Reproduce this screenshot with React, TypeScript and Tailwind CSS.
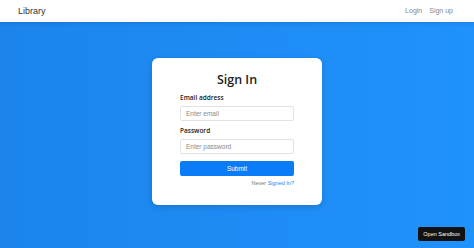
export default function App() {
  return (
    <div className="flex h-[248px] w-[474px] flex-col overflow-hidden font-['Liberation_Sans',sans-serif]">
      <header className="relative z-10 flex h-[22px] shrink-0 items-center justify-between bg-white pl-[18px] pr-[21px] pt-[1px] shadow-[0_1px_4px_rgba(0,0,0,0.15)]">
        <span className="text-[9px] text-[#333]">Library</span>
        <nav className="flex gap-[7px] text-[7px] text-[#888]">
          <span>Login</span>
          <span>Sign up</span>
        </nav>
      </header>
      <main className="relative flex flex-1 justify-center bg-gradient-to-r from-[#1b85ec] to-[#2092fb] pt-[36px]">
        <div className="flex h-[147px] w-[170px] flex-col rounded-[6px] bg-white px-[28px] pt-[14px] shadow-[0_2px_6px_rgba(0,0,0,0.15)]">
          <h1 className="text-center font-['Open_Sans',sans-serif] text-[12.5px] font-semibold leading-[16px] text-[#222]">
            Sign In
          </h1>
          <label className="mt-[5px] font-['Open_Sans',sans-serif] text-[6.5px] font-semibold leading-[10px] text-[#222]">
            Email address
          </label>
          <div className="mt-[3px] flex h-[15px] items-center rounded-[2px] border border-[#e3e3e3] px-[5px] text-[6.5px] text-[#888]">
            Enter email
          </div>
          <label className="mt-[5px] font-['Open_Sans',sans-serif] text-[6.5px] font-semibold leading-[10px] text-[#222]">
            Password
          </label>
          <div className="mt-[3px] flex h-[15px] items-center rounded-[2px] border border-[#e3e3e3] px-[5px] text-[6.5px] text-[#888]">
            Enter password
          </div>
          <button className="mt-[7px] flex h-[15px] items-center justify-center rounded-[2px] bg-[#0a7cf7] text-[6.5px] text-white">
            Submit
          </button>
          <p className="mt-[3px] text-right text-[5.5px] leading-[8px] text-[#777]">
            Never <span className="text-[#1a7ff0]">Signed In?</span>
          </p>
        </div>
        <button className="absolute bottom-[7px] right-[9px] flex h-[14px] items-center rounded-[2px] bg-[#121212] px-[5px] text-[5.5px] text-white">
          Open Sandbox
        </button>
      </main>
    </div>
  );
}
